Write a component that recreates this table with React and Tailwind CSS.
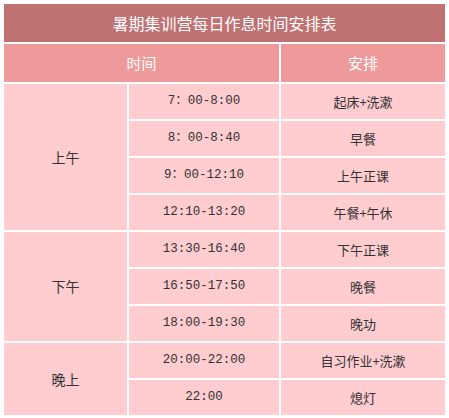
import React from 'react';

const schedule = [
  {
    period: '上午',
    items: [
      ['7：00-8:00', '起床+洗漱'],
      ['8：00-8:40', '早餐'],
      ['9：00-12:10', '上午正课'],
      ['12:10-13:20', '午餐+午休'],
    ],
  },
  {
    period: '下午',
    items: [
      ['13:30-16:40', '下午正课'],
      ['16:50-17:50', '晚餐'],
      ['18:00-19:30', '晚功'],
    ],
  },
  {
    period: '晚上',
    items: [
      ['20:00-22:00', '自习作业+洗漱'],
      ['22:00', '熄灯'],
    ],
  },
];

const cjk = { fontFamily: '"Noto Sans CJK SC", "Noto Sans", sans-serif' };
const mono = { fontFamily: '"Liberation Mono", "Noto Sans CJK SC", monospace' };

export default function App() {
  return (
    <div className="bg-white w-[449px] h-[418px] pt-[2px] pl-[2px]" style={cjk}>
      <table className="table-fixed border-separate border-spacing-[2px] w-[445px]">
        <colgroup>
          <col className="w-[123px]" />
          <col className="w-[150px]" />
          <col className="w-[164px]" />
        </colgroup>
        <thead>
          <tr>
            <th colSpan={3} className="h-[38px] p-0 bg-[#c07171] text-white text-[16px] font-normal text-center align-middle">
              暑期集训营每日作息时间安排表
            </th>
          </tr>
          <tr>
            <th colSpan={2} className="h-[38px] p-0 bg-[#ee999a] text-white text-[15px] font-normal text-center align-middle">
              时间
            </th>
            <th className="h-[38px] p-0 bg-[#ee999a] text-white text-[15px] font-normal text-center align-middle">
              安排
            </th>
          </tr>
        </thead>
        <tbody>
          {schedule.map((group) =>
            group.items.map(([time, task], i) => (
              <tr key={time}>
                {i === 0 && (
                  <td rowSpan={group.items.length} className="p-0 bg-[#ffccd0] text-[#333] text-[14px] text-center align-middle">
                    {group.period}
                  </td>
                )}
                <td className="h-[35px] p-0 bg-[#ffccd0] text-[#333] text-[12.5px] text-center align-middle" style={mono}>
                  {time}
                </td>
                <td className="h-[35px] p-0 bg-[#ffccd0] text-[#333] text-[13px] text-center align-middle">
                  {task}
                </td>
              </tr>
            ))
          )}
        </tbody>
      </table>
    </div>
  );
}
